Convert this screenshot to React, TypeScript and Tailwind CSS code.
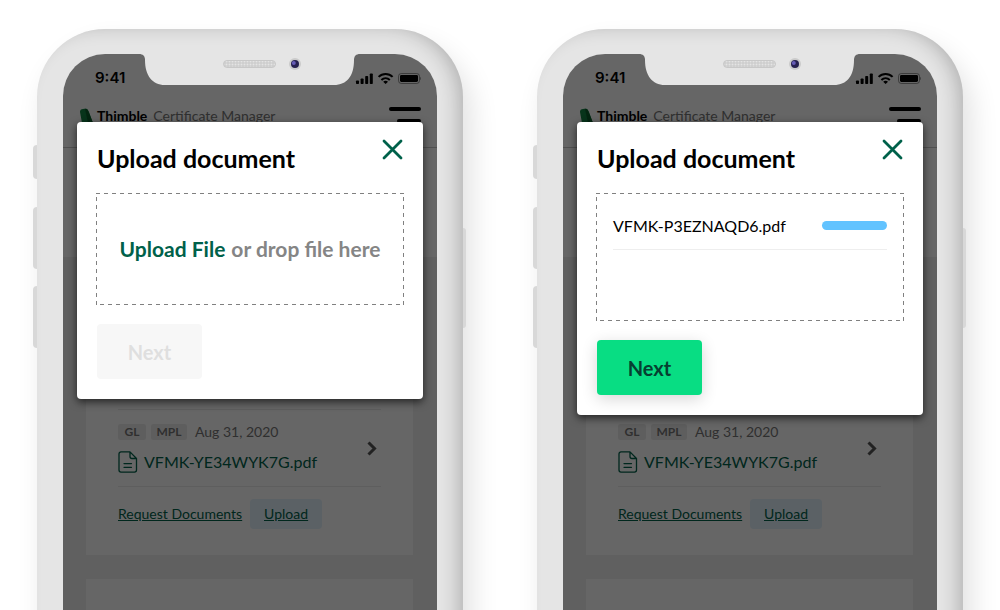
import { useId } from "react";
import type { ReactNode } from "react";

function StatusIcons() {
  return (
    <svg width="66" height="13" viewBox="0 0 66 13" aria-hidden="true">
      <rect x="1" y="8.5" width="3" height="3.5" rx="0.8" />
      <rect x="5.6" y="6.5" width="3" height="5.5" rx="0.8" />
      <rect x="10.2" y="4" width="3" height="8" rx="0.8" />
      <rect x="14.8" y="1.4" width="3" height="10.6" rx="0.8" />
      <g fill="none" stroke="#000" strokeWidth="2">
        <path d="M23.6 4.9a10 10 0 0 1 14 0" />
        <path d="M26.4 7.9a6.2 6.2 0 0 1 8.4 0" />
      </g>
      <path d="M28.2 9.7a3.6 3.6 0 0 1 4.8 0L30.6 12z" />
      <rect x="43.5" y="1.5" width="21" height="10" rx="2.8" fill="none" stroke="#000" strokeOpacity="0.4" />
      <rect x="45" y="3" width="18" height="7" rx="1.4" />
      <path d="M65.3 4.8c1 .5 1 3 0 3.5z" opacity="0.5" />
    </svg>
  );
}

function Notch() {
  const id = useId();
  return (
    <svg className="absolute left-1/2 top-0 -translate-x-1/2" width="224" height="31" viewBox="0 0 224 31" aria-hidden="true">
      <defs>
        <pattern id={id} width="3" height="3" patternUnits="userSpaceOnUse">
          <rect width="3" height="3" fill="#c9c9c9" />
          <rect x="0.5" y="0.5" width="2" height="2" fill="#e4e4e4" />
        </pattern>
      </defs>
      <path d="M0 0V0H1C5 0 7 2 7 6C7 21 14 31 27 31H196C209 31 216 22 216 6C216 2 218 0 222 0z" fill="#e5e5e5" />
      <rect x="85.500" y="6.500" width="52" height="7" rx="3.500" fill={`url(#${id})`} stroke="#c8c8c8" />
      <circle cx="157" cy="10" r="6" fill="#cbcbcb" />
      <circle cx="157" cy="10" r="4" fill="#26204f" />
      <circle cx="155.800" cy="9" r="2" fill="#655bb5" />
    </svg>
  );
}

function DocumentIcon() {
  return (
    <svg width="20" height="22" viewBox="0 0 20 22" fill="none" stroke="#00614a" strokeWidth="1.3" strokeLinecap="round" strokeLinejoin="round" aria-hidden="true">
      <path d="M12 .9H3a2 2 0 0 0-2 2v16.200a2 2 0 0 0 2 2h13.500a2 2 0 0 0 2-2V7.500L12 .9v4.600a2 2 0 0 0 2 2h4.500" />
      <path d="M6 12.600h7.500M6 16.300h7.500" />
    </svg>
  );
}

function Page() {
  return (
    <div className="flex h-full flex-col bg-[#f1f1f1]">
      <div className="bg-white pb-[109px]">
        <div className="border-b border-[#c8c8c8] pb-6">
          <div className="flex h-11 items-center justify-between pl-8 pr-4 pt-1 font-[Inter] text-[15px] font-semibold">
            <span>9:41</span>
            <StatusIcons />
          </div>
          <header className="flex h-[25px] items-start justify-between px-4 pt-2">
            <div className="flex items-center gap-1.5">
              <div className="flex items-center gap-1">
                <svg width="14" height="20" viewBox="0 0 14 20" aria-hidden="true">
                  <path d="M1 6Q1 3 4 3L7 2.500Q9 3 10 6L14 17H3z" fill="#128344" />
                  <path d="M6 3L8 3Q9 4 10 7L14 17H9z" fill="#085c2c" />
                </svg>
                <span className="text-sm font-bold">Thimble</span>
              </div>
              <span className="text-sm text-[#777]">Certificate Manager</span>
            </div>
            <button type="button" aria-label="Menu" className="flex flex-col items-end gap-2 pt-px">
              <span className="h-1 w-8 rounded-full bg-black" />
              <span className="h-1 w-6 rounded-full bg-black" />
            </button>
          </header>
        </div>
      </div>
      <div className="flex flex-1 flex-col gap-6 px-6">
        <article className="-ml-px flex h-[298px] shrink-0 flex-col justify-end bg-white px-8 pb-[26px]">
          <div className="flex items-center justify-between border-y border-[#ececec] pb-3 pt-[14px]">
            <div>
              <div className="flex items-center gap-[5px] text-sm leading-4 text-[#777]">
                <span className="w-7 rounded-xs bg-[#ececec] text-center text-xs leading-4 font-bold">GL</span>
                <span className="w-9 rounded-xs bg-[#ececec] text-center text-xs leading-4 font-bold">MPL</span>
                <time className="ml-[3px]">Aug 31, 2020</time>
              </div>
              <a href="#certificate" className="mt-2.5 flex items-center gap-1.5 text-base leading-6 text-[#00614a]">
                <DocumentIcon />
                VFMK-YE34WYK7G.pdf
              </a>
            </div>
            <svg className="mr-1" width="10" height="16" viewBox="0 0 10 16" fill="none" stroke="#555" strokeWidth="3" aria-hidden="true">
              <path d="M1.500 1.500L7.500 7.500L1.500 13.500" />
            </svg>
          </div>
          <div className="mt-3 flex items-center gap-2 text-sm text-[#00614a] underline">
            <a href="#request">Request Documents</a>
            <a href="#upload" className="rounded bg-[#e3f2fc] px-[14px] py-[5px]">Upload</a>
          </div>
        </article>
        <article className="-ml-px flex-1 bg-white" />
      </div>
    </div>
  );
}

function Dialog({ children, disabled }: { children: ReactNode; disabled?: boolean }) {
  const titleId = useId();
  return (
    <div className="absolute inset-0 bg-black/60 px-[14px] pt-[68px]">
      <section role="dialog" aria-labelledby={titleId} className="rounded bg-white px-5 pb-5 shadow-[0_3px_8px_rgba(0,0,0,0.65)]">
        <div className="flex items-start justify-between pt-[17px]">
          <h2 id={titleId} className="pt-[3px] text-[25px] leading-8 font-bold">Upload document</h2>
          <button type="button" aria-label="Close" className="mb-[15px]">
            <svg width="21" height="21" viewBox="0 0 21 21" fill="none" stroke="#00614a" strokeWidth="2.800" strokeLinecap="round" aria-hidden="true">
              <path d="M2 2L19 19M19 2L2 19" />
            </svg>
          </button>
        </div>
        <div className="relative -mx-px mt-[18px]">
          <svg className="pointer-events-none absolute inset-0 h-full w-full" fill="none" stroke="#808080" strokeWidth="2" strokeDasharray="4 4" aria-hidden="true">
            <rect width="100%" height="100%" />
          </svg>
          {children}
        </div>
        <button
          type="button"
          disabled={disabled}
          className="mt-[19px] block h-[55px] w-[105px] rounded bg-[#08dd83] pt-px text-xl font-bold text-[#063f31] shadow-[0_4px_16px_rgba(0,0,0,0.16)] disabled:bg-[#f7f7f7] disabled:text-[#dfdfdf] disabled:shadow-none"
        >
          Next
        </button>
      </section>
    </div>
  );
}

function Phone({ children }: { children: ReactNode }) {
  return (
    <div className="relative -mb-10 flex w-[426px] flex-col rounded-t-[68px] bg-[#e5e5e5] px-[26px] pt-[25px] shadow-[inset_-10px_2px_20px_-6px_rgba(0,0,0,0.24),8px_16px_28px_rgba(0,0,0,0.12)]">
      <span className="absolute right-full top-[116px] h-[34px] w-1 rounded-l-sm bg-[#d8d8d8]" />
      <span className="absolute right-full top-[178px] h-[62px] w-1 rounded-l-sm bg-[#d8d8d8]" />
      <span className="absolute right-full top-[257px] h-[62px] w-1 rounded-l-sm bg-[#d8d8d8]" />
      <span className="absolute left-full top-[199px] h-[100px] w-[3px] rounded-r-sm bg-[#d8d8d8]" />
      <div className="relative flex-1 overflow-hidden rounded-t-[42px]">
        <Page />
        {children}
        <Notch />
      </div>
    </div>
  );
}

export default function App() {
  const fileId = useId();
  return (
    <main className="grid h-screen grid-cols-2 justify-items-center overflow-hidden bg-white pt-[29px] font-[Lato,sans-serif] text-black">
      <Phone>
        <Dialog disabled>
          <label htmlFor={fileId} className="flex h-28 cursor-pointer items-center justify-center gap-[6px] text-[21px] font-bold text-[#858585]">
            <span className="text-[#00614a]">Upload File</span>
            or drop file here
          </label>
          <input id={fileId} type="file" className="sr-only" />
        </Dialog>
      </Phone>
      <Phone>
        <Dialog>
          <div className="h-32 px-[17px] pt-[9px]">
            <div className="flex h-12 items-center justify-between border-b border-[#eee]">
              <span className="text-base">VFMK-P3EZNAQD6.pdf</span>
              <div role="progressbar" aria-label="Upload progress" aria-valuenow={100} className="h-[9px] w-[65px] rounded-full bg-[#62c3ff]" />
            </div>
          </div>
        </Dialog>
      </Phone>
    </main>
  );
}
